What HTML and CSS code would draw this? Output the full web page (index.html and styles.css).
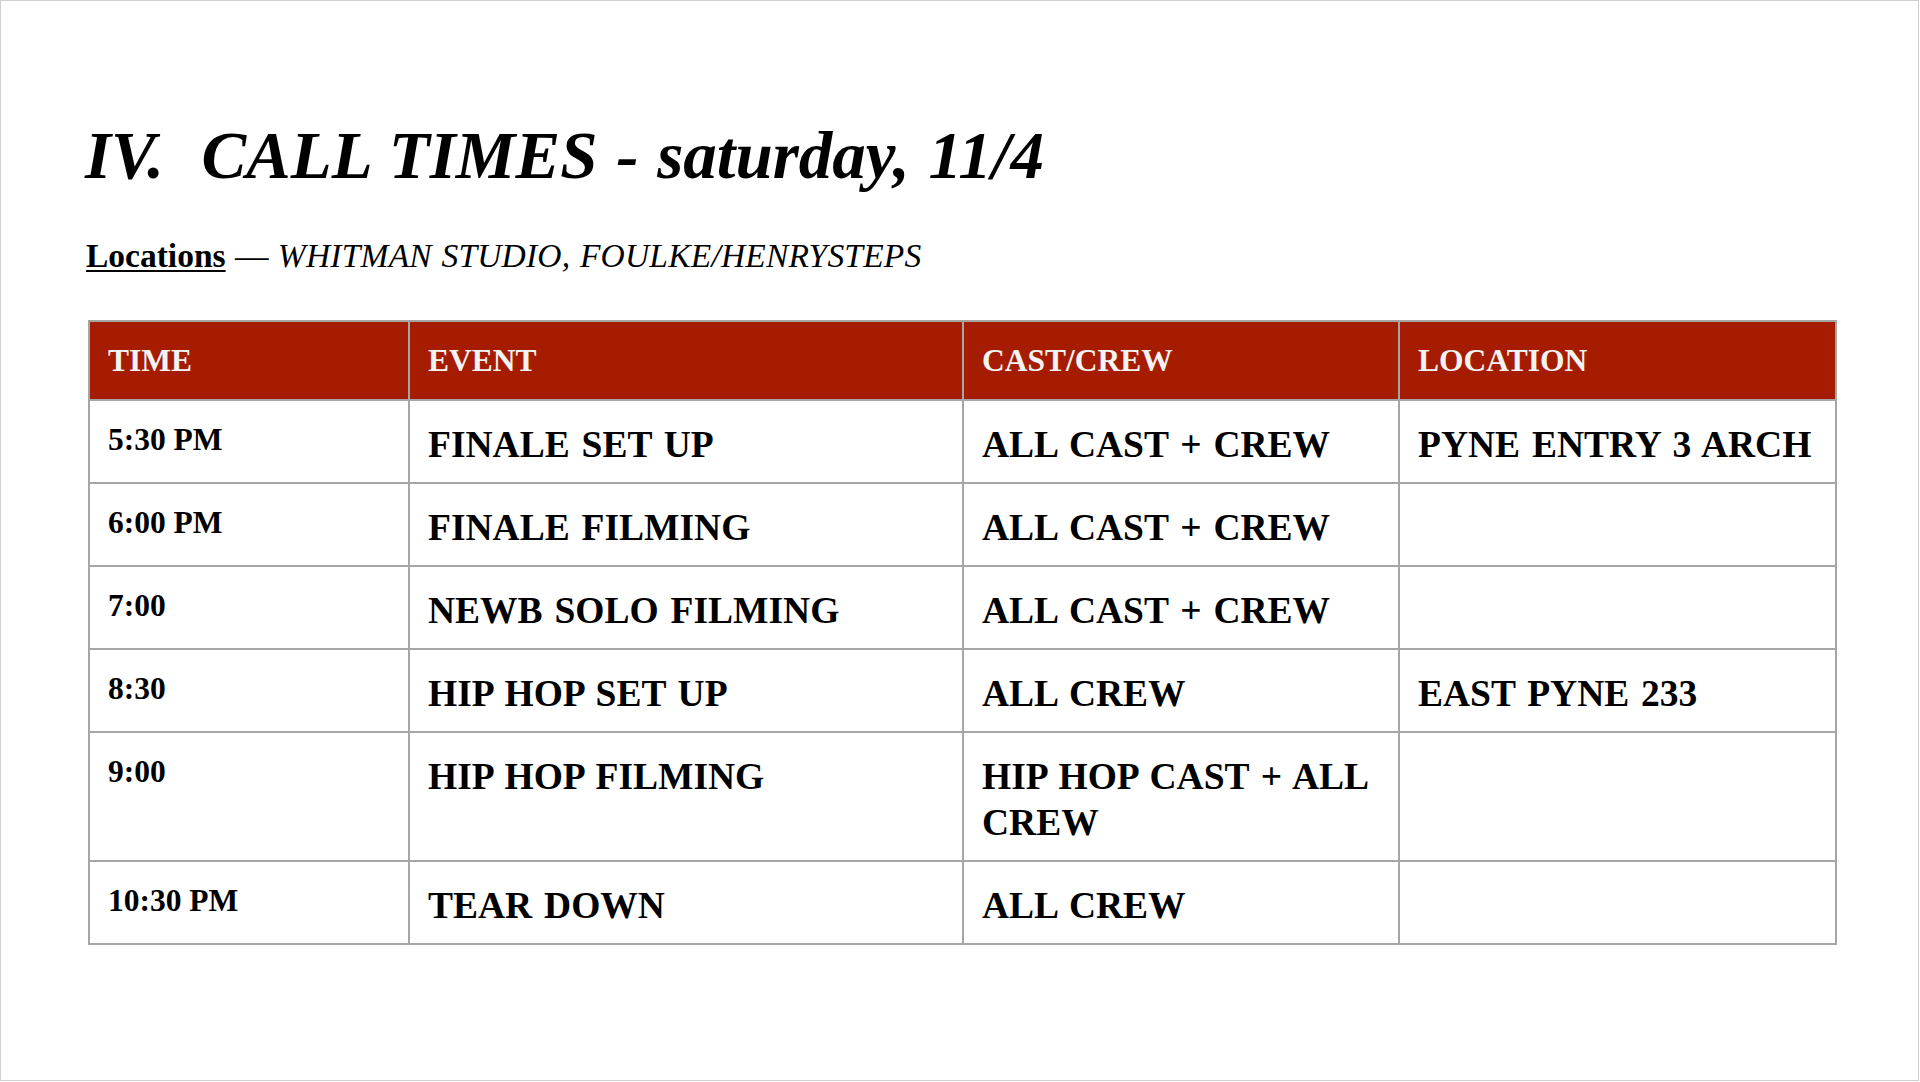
FILE: index.html
```html
<!DOCTYPE html>
<html lang="en">
<head>
<meta charset="utf-8">
<title>IV. CALL TIMES - saturday, 11/4</title>
<link rel="stylesheet" href="styles.css">
</head>
<body>
<div class="slide">
  <h1 class="title">IV.&nbsp; CALL TIMES - saturday, 11/4</h1>
  <p class="locations"><span class="loc-label">Locations</span> — <span class="loc-list">WHITMAN STUDIO, FOULKE/HENRYSTEPS</span></p>
  <table class="schedule">
    <colgroup>
      <col class="c-time">
      <col class="c-event">
      <col class="c-crew">
      <col class="c-loc">
    </colgroup>
    <thead>
      <tr><th>TIME</th><th>EVENT</th><th>CAST/CREW</th><th>LOCATION</th></tr>
    </thead>
    <tbody>
      <tr><td class="time">5:30 PM</td><td>FINALE SET UP</td><td>ALL CAST + CREW</td><td>PYNE ENTRY 3 ARCH</td></tr>
      <tr><td class="time">6:00 PM</td><td>FINALE FILMING</td><td>ALL CAST + CREW</td><td></td></tr>
      <tr><td class="time">7:00</td><td>NEWB SOLO FILMING</td><td>ALL CAST + CREW</td><td></td></tr>
      <tr><td class="time">8:30</td><td>HIP HOP SET UP</td><td>ALL CREW</td><td>EAST PYNE 233</td></tr>
      <tr><td class="time">9:00</td><td>HIP HOP FILMING</td><td>HIP HOP CAST + ALL CREW</td><td></td></tr>
      <tr><td class="time">10:30 PM</td><td>TEAR DOWN</td><td>ALL CREW</td><td></td></tr>
    </tbody>
  </table>
</div>
</body>
</html>
```
FILE: styles.css
```css
html, body {
  margin: 0;
  padding: 0;
  background: #ffffff;
}

.slide {
  width: 1919px;
  height: 1081px;
  box-sizing: border-box;
  border: 1px solid #cfcfcf;
  padding: 0 0 0 86px;
  font-family: "Liberation Serif", "Times New Roman", serif;
  color: #000;
  overflow: hidden;
}

.title {
  margin: 116px 0 0 -2px;
  font-size: 67px;
  line-height: 76px;
  font-weight: bold;
  font-style: italic;
  word-spacing: 2px;
  white-space: nowrap;
}

.locations {
  margin: 43px 0 0 -1px;
  font-size: 33.5px;
  line-height: 40px;
  word-spacing: 1px;
  white-space: nowrap;
}

.loc-label {
  font-weight: bold;
  text-decoration: underline;
  text-decoration-thickness: 2px;
  text-underline-offset: 3px;
}

.loc-list {
  font-style: italic;
  letter-spacing: 0.2px;
}

.schedule {
  margin: 44px 0 0 1px;
  border-collapse: collapse;
  table-layout: fixed;
  width: 1747px;
}

.c-time { width: 320px; }
.c-event { width: 554px; }
.c-crew { width: 436px; }
.c-loc { width: 437px; }

.schedule th,
.schedule td {
  border: 2px solid #a6a6a6;
  text-align: left;
  vertical-align: top;
  padding: 21px 19px 14px 18px;
  font-weight: bold;
}

.schedule th {
  background: #a61c00;
  color: #f3f3f3;
  font-size: 31.5px;
  line-height: 36px;
  padding-bottom: 20px;
  word-spacing: 1px;
}

.schedule td {
  font-size: 37.5px;
  line-height: 46px;
  word-spacing: 2.5px;
}

.schedule td.time {
  font-size: 31.5px;
  line-height: 36px;
  word-spacing: 0;
}
```
